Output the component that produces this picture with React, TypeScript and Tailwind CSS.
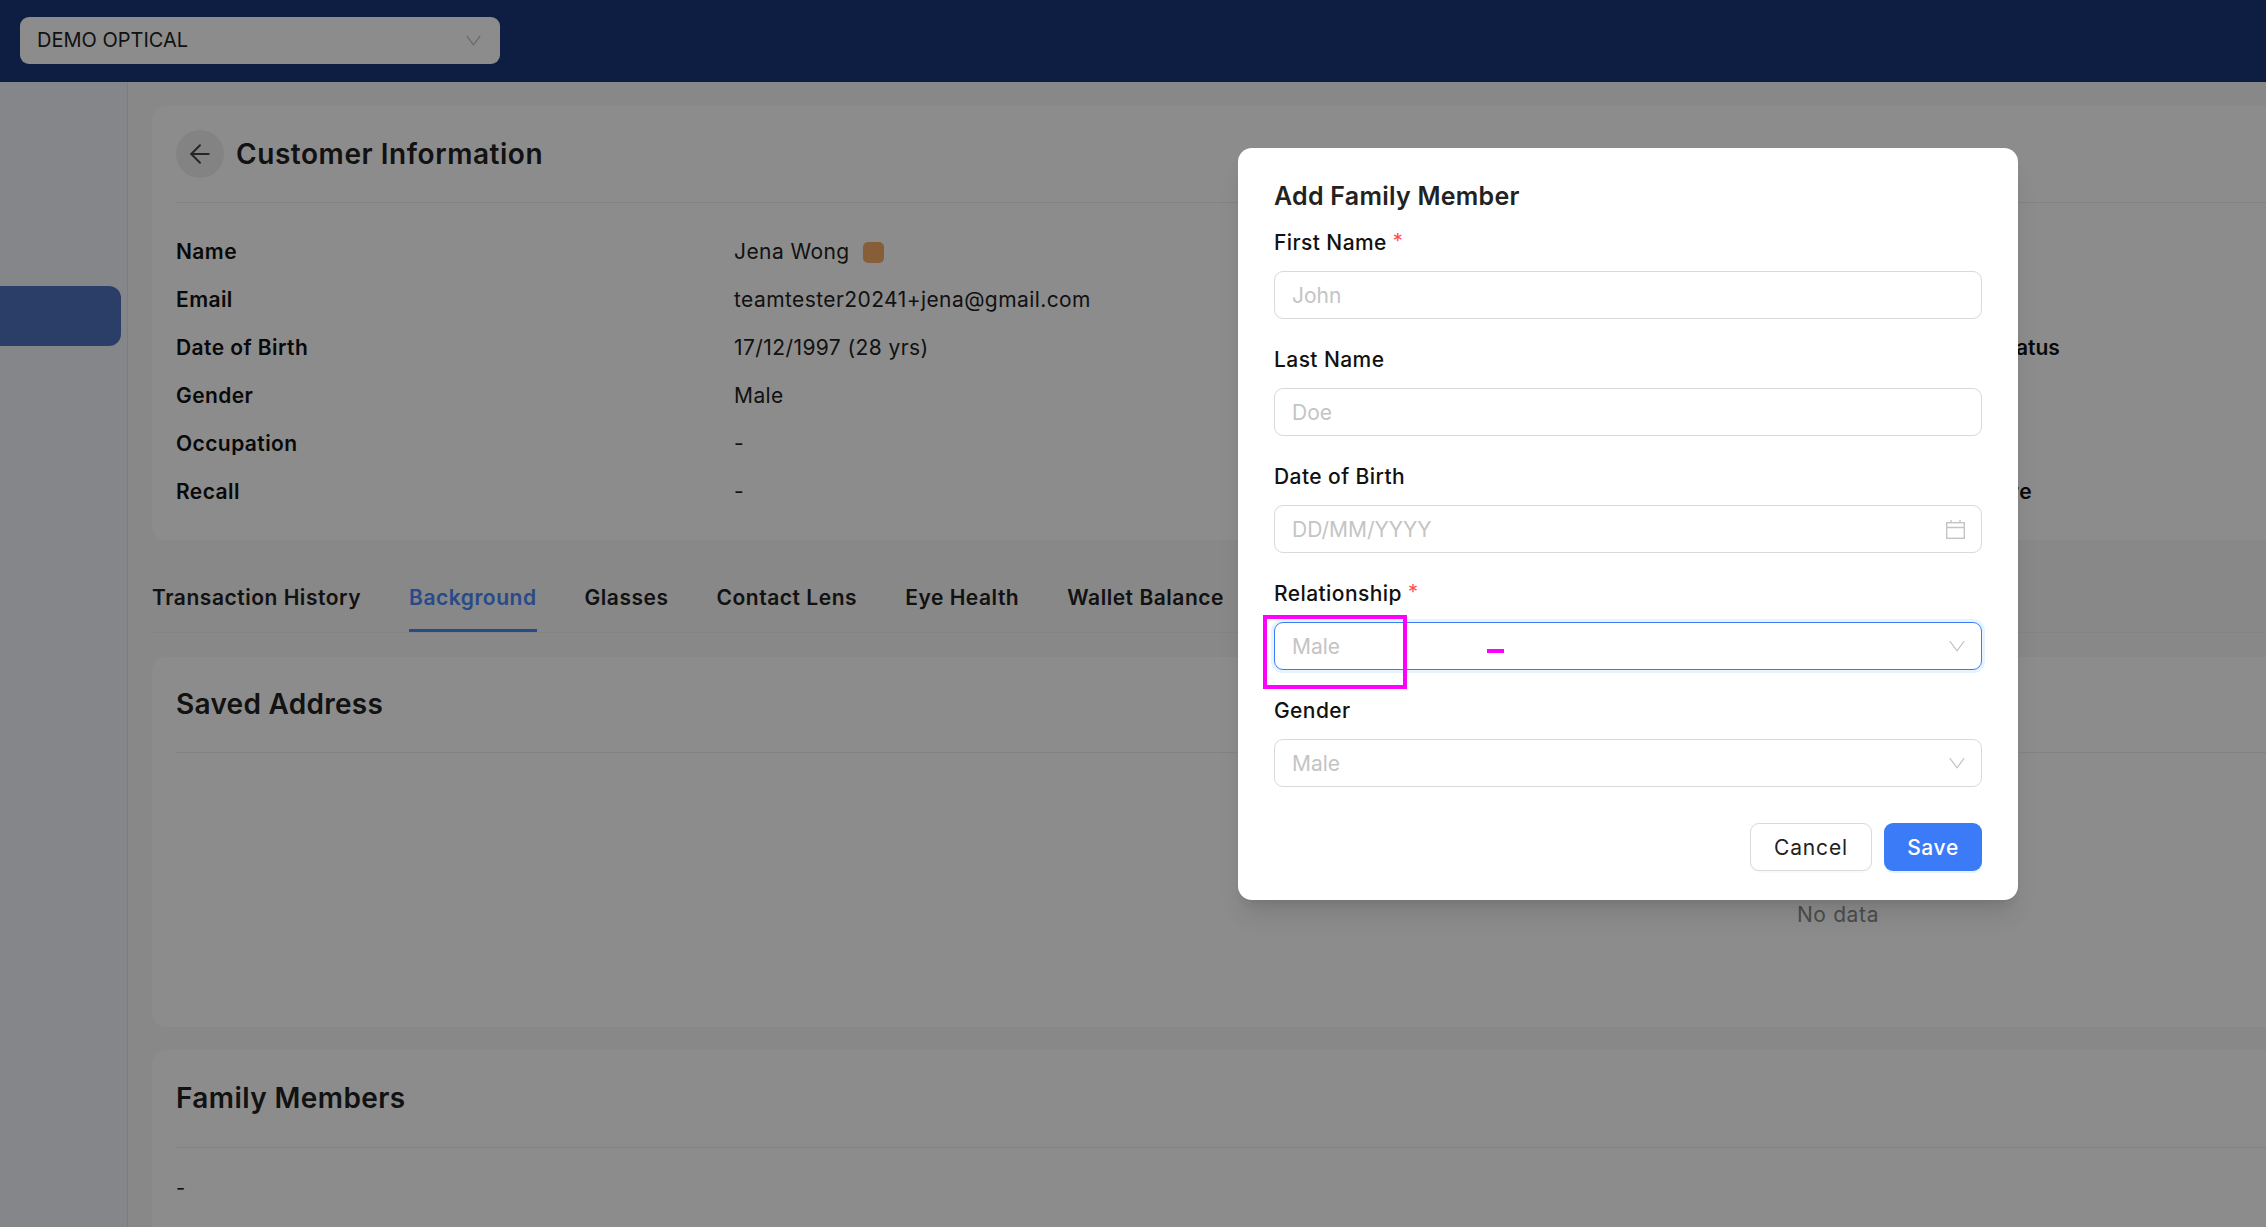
import { ArrowLeft } from "lucide-react";

const font = "font-['Inter','Liberation_Sans',sans-serif]";

const details = [
  { label: "Name", value: "Jena Wong", swatch: true },
  { label: "Email", value: "teamtester20241+jena@gmail.com" },
  { label: "Date of Birth", value: "17/12/1997 (28 yrs)", side: "Membership Status", sideClass: "tracking-normal" },
  { label: "Gender", value: "Male" },
  { label: "Occupation", value: "-" },
  { label: "Recall", value: "-", side: "Preferred Store", sideClass: "tracking-[0.05em]" },
];

const tabs = ["Transaction History", "Background", "Glasses", "Contact Lens", "Eye Health", "Wallet Balance"];

function Chevron({ className }: { className: string }) {
  return (
    <svg viewBox="0 0 16 12" fill="none" stroke="currentColor" strokeWidth="1.2" className={className}>
      <path d="M0.7 1 L8 10.8 L15.3 1" />
    </svg>
  );
}

function CalendarIcon() {
  return (
    <svg viewBox="0 0 19 19" fill="none" stroke="currentColor" strokeWidth="1.4" className="h-[19px] w-[19px] text-[#c4c4c4]">
      <rect x="0.7" y="2.7" width="17.6" height="15.6" />
      <path d="M0.7 7.5 H18.3 M5 0 V2.7 M14 0 V2.7" />
    </svg>
  );
}

function Field({ label, required, placeholder, icon, focused }: {
  label: string;
  required?: boolean;
  placeholder: string;
  icon?: React.ReactNode;
  focused?: boolean;
}) {
  return (
    <div className="flex flex-col">
      <div className="flex h-[29px] items-center text-[21px] font-medium tracking-[0.02em] text-[#111]">
        {label}
        {required && <span className="mb-1 ml-[6px] text-[20px] font-normal text-[#ff4d4f]">*</span>}
      </div>
      <div
        className={`mt-[14px] flex h-[48px] items-center justify-between rounded-[9px] border pl-[17px] pr-[16px] text-[21px] text-[#c4c4c4] ${
          focused ? "border-[#3b7bf8] shadow-[0_0_0_3px_rgba(5,145,255,0.1)]" : "border-[#d9d9d9]"
        }`}
      >
        <span className="pt-[2px]">{placeholder}</span>
        {icon}
      </div>
    </div>
  );
}

export default function App() {
  return (
    <div className={`relative h-screen w-screen overflow-hidden bg-[#f7f7f7] ${font}`}>
      <header className="flex h-[82px] items-center bg-[#1b3878] pl-5">
        <div className="mb-[2px] flex h-[47px] w-[480px] items-center justify-between rounded-[9px] bg-white pl-[17px] pr-[19px] text-[20px] text-[#222]">
          <span>DEMO OPTICAL</span>
          <Chevron className="h-[11px] w-[15px] text-[#bbb]" />
        </div>
      </header>

      <div className="flex">
        <aside className="h-[1145px] w-[128px] shrink-0 border-r border-[#e2e4e8] bg-[#f2f4f9] pt-[204px]">
          <div className="h-[60px] w-[121px] rounded-r-[12px] bg-[#4e71bd]" />
        </aside>

        <main className="flex w-[3420px] shrink-0 flex-col px-6 pt-6">
          <section className="rounded-[14px] bg-white px-6 pt-6 pb-6">
            <div className="flex items-center gap-3 border-b border-[#eeeeee] pb-6">
              <div className="flex h-12 w-12 items-center justify-center rounded-full bg-[#efefef]">
                <ArrowLeft size={30} strokeWidth={1.5} className="text-[#444]" />
              </div>
              <h1 className="text-[28px] font-semibold tracking-[0.02em] text-[#222]">Customer Information</h1>
            </div>
            <div className="mt-[25px] flex flex-col">
              {details.map((row) => (
                <div key={row.label} className="flex h-12 items-center text-[21px] tracking-[0.02em]">
                  <span className="w-[557px] font-semibold text-[#111]">{row.label}</span>
                  <span className="flex w-[1129px] items-center gap-[13px] pl-[1px] text-[#222]">
                    {row.value}
                    {row.swatch && <span className="h-[21px] w-[21px] rounded-[5px] bg-[#f4ae69]" />}
                  </span>
                  {row.side && <span className={`font-semibold text-[#111] ${row.sideClass}`}>{row.side}</span>}
                </div>
              ))}
            </div>
          </section>

          <nav className="mt-6 flex h-[69px] gap-12 border-b border-[#f0f0f0]">
            {tabs.map((tab) => (
              <div
                key={tab}
                className={`flex items-center border-b-[3px] pt-[2px] text-[21px] font-semibold tracking-[0.025em] ${
                  tab === "Background" ? "border-[#4987fa] text-[#4987fa]" : "border-transparent text-[#222]"
                }`}
              >
                {tab}
              </div>
            ))}
          </nav>

          <section className="mt-6 h-[370px] rounded-[14px] bg-white px-6">
            <div className="flex h-[96px] items-center border-b border-[#eeeeee] pb-[1px] text-[28px] font-semibold tracking-[0.01em] text-[#222]">
              Saved Address
            </div>
            <div className="flex justify-center pt-[146px] text-[21px] tracking-[0.03em] text-[#8a8a8a]">No data</div>
          </section>

          <section className="mt-[23px] h-[300px] rounded-[14px] bg-white px-6">
            <div className="flex h-[98px] items-center border-b border-[#eeeeee] pb-[1px] text-[28px] font-semibold tracking-[0.015em] text-[#222]">
              Family Members
            </div>
            <div className="pt-[25px] text-[20px] text-[#222]">-</div>
          </section>
        </main>
      </div>

      {/* modal backdrop */}
      <div className="absolute inset-0 bg-black/45" />

      <div className="absolute top-[148px] left-[1238px] h-[752px] w-[780px] rounded-[14px] bg-white px-9 pt-[33px] shadow-xl">
        <h2 className="text-[25px] font-semibold leading-[30px] tracking-[0.01em] text-[#222]">Add Family Member</h2>
        <div className="mt-[17px] flex flex-col gap-[26px]">
          <Field label="First Name" required placeholder="John" />
          <Field label="Last Name" placeholder="Doe" />
          <Field label="Date of Birth" placeholder="DD/MM/YYYY" icon={<CalendarIcon />} />
          <Field label="Relationship" required placeholder="Male" focused icon={<Chevron className="h-3 w-4 text-[#bfbfbf]" />} />
          <Field label="Gender" placeholder="Male" icon={<Chevron className="h-3 w-4 text-[#bfbfbf]" />} />
        </div>
        <div className="mt-9 flex justify-end gap-3">
          <button className="h-12 w-[122px] rounded-[9px] border border-[#d9d9d9] bg-white pt-[2px] text-[21px] tracking-[0.04em] text-[#222] shadow-[0_2px_0_rgba(0,0,0,0.02)]">
            Cancel
          </button>
          <button className="h-12 w-[98px] rounded-[9px] bg-[#3b7bf8] pt-[2px] text-[21px] font-medium tracking-[0.03em] text-white shadow-[0_2px_0_rgba(5,145,255,0.1)]">
            Save
          </button>
        </div>
      </div>

      {/* annotation marks drawn on the screenshot */}
      <div className="absolute top-[615px] left-[1263px] h-[74px] w-[144px] border-4 border-[#ff00ff]" />
      <div className="absolute top-[649px] left-[1487px] h-1 w-[17px] bg-[#ff00ff]" />
    </div>
  );
}
